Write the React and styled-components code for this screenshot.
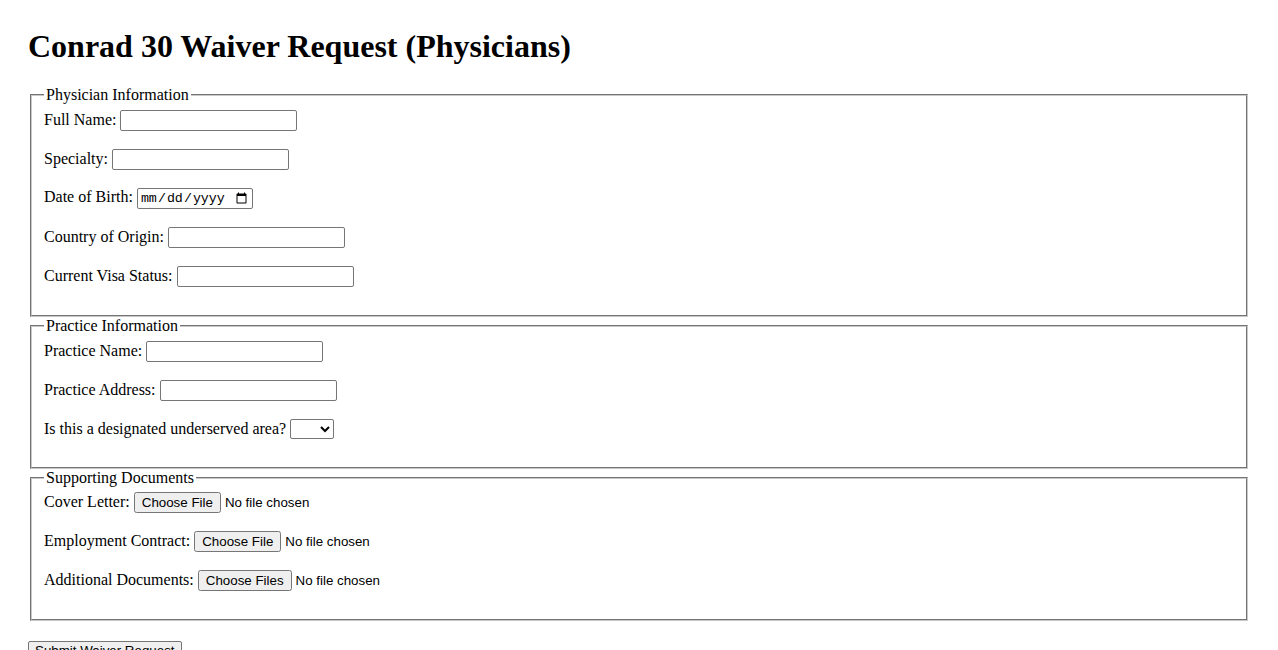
import React from "react";
import styled, { createGlobalStyle } from "styled-components";

const GlobalStyle = createGlobalStyle`
  html, body {
    margin: 0;
    padding: 0;
    background: #ffffff;
  }
  body {
    font-family: "Liberation Serif", "Times New Roman", serif;
    font-size: 16px;
    color: #000000;
  }
`;

const Page = styled.div`
  padding: 28px 28px 20px 28px;
`;

const Title = styled.h1`
  margin: 0 0 21.44px 0;
  font-family: "Liberation Serif", "Times New Roman", serif;
  font-size: 32px;
  font-weight: bold;
  line-height: normal;
`;

const Form = styled.form`
  margin: 0;
`;

const Section = styled.fieldset`
  margin: 0 2px;
  padding: 5.6px 12px 10px 12px;
  border: 2px groove #c8c8c8;
  min-width: 0;
`;

const Legend = styled.legend`
  padding: 0 2px;
  font-size: 16px;
  line-height: normal;
`;

const Field = styled.div`
  margin-bottom: 18px;
  line-height: normal;
`;

const Label = styled.label`
  font-size: 16px;
`;

const controlFont = `
  font-family: "Liberation Sans", Arial, sans-serif;
  font-size: 13.333px;
`;

const TextInput = styled.input`
  ${controlFont}
  box-sizing: border-box;
  width: 177px;
  height: 21px;
  padding: 1px 2px;
  border: 1px solid #767676;
  border-radius: 2px;
  background: #fff;
  vertical-align: baseline;
`;

const DateInput = styled.input`
  font-family: "Liberation Mono", "DejaVu Sans Mono", monospace;
  font-size: 13.333px;
  box-sizing: border-box;
  width: 116px;
  height: 21px;
  padding: 1px 2px;
  border: 1px solid #767676;
  border-radius: 2px;
  background: #fff;
`;

const Select = styled.select`
  ${controlFont}
  box-sizing: border-box;
  width: 44px;
  height: 20px;
  border: 1px solid #767676;
  border-radius: 2px;
  background: #fff;
`;

const FileInput = styled.input`
  ${controlFont}
  color: #000;
`;

const SubmitButton = styled.button`
  ${controlFont}
  margin-top: 20px;
  padding: 1px 6px;
  border: 1px solid #767676;
  border-radius: 2px;
  background: #efefef;
  color: #000;
`;

const TextField = ({ id, label }) => (
  <Field>
    <Label htmlFor={id}>{label}</Label> <TextInput id={id} type="text" />
  </Field>
);

const FileField = ({ id, label, multiple }) => (
  <Field>
    <Label htmlFor={id}>{label}</Label>{" "}
    <FileInput id={id} type="file" multiple={multiple} />
  </Field>
);

export default function App() {
  return (
    <>
      <GlobalStyle />
      <Page>
        <Title>Conrad 30 Waiver Request (Physicians)</Title>
        <Form onSubmit={(e) => e.preventDefault()}>
          <Section>
            <Legend>Physician Information</Legend>
            <TextField id="fullName" label="Full Name:" />
            <TextField id="specialty" label="Specialty:" />
            <Field>
              <Label htmlFor="dob">Date of Birth:</Label>{" "}
              <DateInput id="dob" type="date" />
            </Field>
            <TextField id="country" label="Country of Origin:" />
            <TextField id="visa" label="Current Visa Status:" />
          </Section>
          <Section>
            <Legend>Practice Information</Legend>
            <TextField id="practiceName" label="Practice Name:" />
            <TextField id="practiceAddress" label="Practice Address:" />
            <Field>
              <Label htmlFor="underserved">Is this a designated underserved area?</Label>{" "}
              <Select id="underserved" defaultValue="">
                <option value=""></option>
                <option value="yes">Yes</option>
                <option value="no">No</option>
              </Select>
            </Field>
          </Section>
          <Section>
            <Legend>Supporting Documents</Legend>
            <FileField id="coverLetter" label="Cover Letter:" />
            <FileField id="contract" label="Employment Contract:" />
            <FileField id="additional" label="Additional Documents:" multiple />
          </Section>
          <SubmitButton type="submit">Submit Waiver Request</SubmitButton>
        </Form>
      </Page>
    </>
  );
}
